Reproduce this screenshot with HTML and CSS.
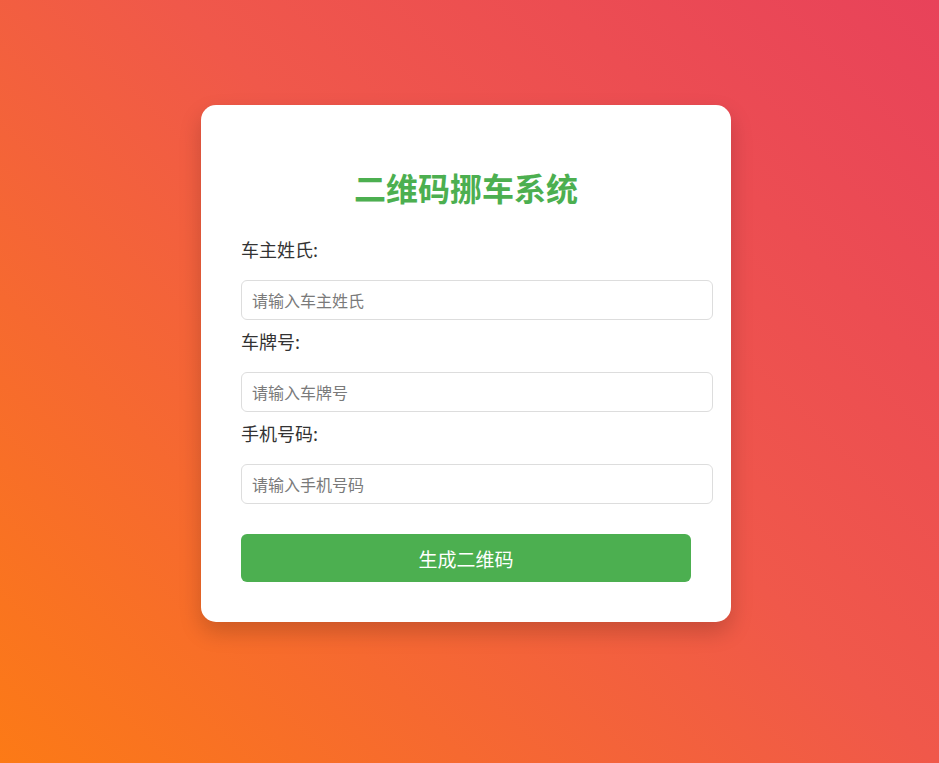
FILE: index.html
```html
<!DOCTYPE html>
<html lang="zh-CN">
<head>
<meta charset="utf-8">
<title>二维码挪车系统</title>
<link rel="stylesheet" href="styles.css">
</head>
<body>
<div class="card">
  <h1 class="title">二维码挪车系统</h1>
  <form class="form">
    <label class="label" for="name">车主姓氏:</label>
    <input class="input" id="name" type="text" placeholder="请输入车主姓氏">
    <label class="label" for="plate">车牌号:</label>
    <input class="input" id="plate" type="text" placeholder="请输入车牌号">
    <label class="label" for="phone">手机号码:</label>
    <input class="input" id="phone" type="text" placeholder="请输入手机号码">
    <button class="btn" type="button">生成二维码</button>
  </form>
</div>
</body>
</html>
```
FILE: styles.css
```css
html, body {
  margin: 0;
  height: 100%;
}
body {
  font-family: "Noto Sans CJK SC", "Noto Sans", sans-serif;
  background: linear-gradient(45deg, #fc7a16 0%, #f0584a 55%, #e8425a 100%);
  display: flex;
  align-items: center;
  justify-content: center;
  padding: 0 7px 36px 0;
  box-sizing: border-box;
}
.card {
  background: #fff;
  width: 450px;
  padding: 40px;
  border-radius: 15px;
  box-shadow: 0 10px 22px rgba(0, 0, 0, 0.18);
}
.title {
  margin: 22px 0 21px;
  font-size: 32px;
  line-height: 40px;
  font-weight: 700;
  color: #4caf50;
  text-align: center;
}
.form {
  display: flex;
  flex-direction: column;
  align-items: flex-start;
}
.label {
  display: block;
  margin-top: 8px;
  margin-bottom: 18px;
  font-size: 18px;
  line-height: 26px;
  color: #333;
}
.input {
  width: 100%;
  box-sizing: content-box;
  height: 38px;
  padding: 0 10px;
  border: 1px solid #ddd;
  border-radius: 6px;
  font-family: inherit;
  font-size: 16px;
  color: #333;
  background: #fff;
  margin: 0;
  outline: none;
}
.input::placeholder {
  color: #7a7a7a;
}
.btn {
  margin-top: 30px;
  width: 100%;
  height: 48px;
  border: none;
  border-radius: 6px;
  background: #4caf50;
  color: #fff;
  font-family: inherit;
  font-size: 19px;
  cursor: pointer;
}
```
